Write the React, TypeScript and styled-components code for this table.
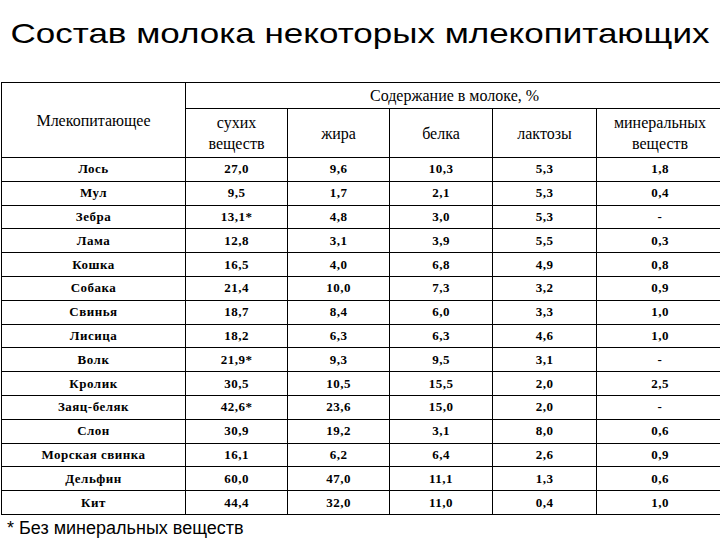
import React from 'react';
import styled, { createGlobalStyle } from 'styled-components';

const rows: [string, string, string, string, string, string][] = [
  ['Лось', '27,0', '9,6', '10,3', '5,3', '1,8'],
  ['Мул', '9,5', '1,7', '2,1', '5,3', '0,4'],
  ['Зебра', '13,1*', '4,8', '3,0', '5,3', '-'],
  ['Лама', '12,8', '3,1', '3,9', '5,5', '0,3'],
  ['Кошка', '16,5', '4,0', '6,8', '4,9', '0,8'],
  ['Собака', '21,4', '10,0', '7,3', '3,2', '0,9'],
  ['Свинья', '18,7', '8,4', '6,0', '3,3', '1,0'],
  ['Лисица', '18,2', '6,3', '6,3', '4,6', '1,0'],
  ['Волк', '21,9*', '9,3', '9,5', '3,1', '-'],
  ['Кролик', '30,5', '10,5', '15,5', '2,0', '2,5'],
  ['Заяц-беляк', '42,6*', '23,6', '15,0', '2,0', '-'],
  ['Слон', '30,9', '19,2', '3,1', '8,0', '0,6'],
  ['Морская свинка', '16,1', '6,2', '6,4', '2,6', '0,9'],
  ['Дельфин', '60,0', '47,0', '11,1', '1,3', '0,6'],
  ['Кит', '44,4', '32,0', '11,0', '0,4', '1,0'],
];

const colWidths = [184, 102, 102, 103, 104, 127];

const serif = `'Liberation Serif', 'Times New Roman', 'DejaVu Serif', serif`;

const GlobalStyle = createGlobalStyle`
  html, body {
    margin: 0;
    padding: 0;
    background: #ffffff;
    overflow: hidden;
  }
`;

const Page = styled.div`
  width: 720px;
  height: 540px;
  overflow: hidden;
  display: flex;
  flex-direction: column;
  background: #ffffff;
`;

const Title = styled.h1`
  margin: 0;
  padding-top: 17px;
  height: 82px;
  box-sizing: border-box;
  text-align: center;
  font-family: 'Liberation Sans', Arial, sans-serif;
  font-weight: 400;
  font-size: 28px;
  line-height: 34px;
  color: #000000;
  white-space: nowrap;
  transform: scaleX(1.25);
  transform-origin: 50% 0;
`;

const TableWrap = styled.div`
  padding-left: 1px;
  width: 730px;
`;

const Table = styled.table`
  border-collapse: collapse;
  table-layout: fixed;
  width: 722px;
  color: #000000;
  font-family: ${serif};
`;

const HeadCell = styled.th<{ $h?: number }>`
  border: 1px solid #000000;
  font-family: ${serif};
  font-weight: 400;
  font-size: 16px;
  line-height: 21px;
  text-align: center;
  vertical-align: middle;
  padding: 0 2px;
  height: ${({ $h }) => ($h ? `${$h}px` : 'auto')};
`;

const Row = styled.tr`
  height: 23.8px;
`;

const Cell = styled.td<{ $name?: boolean }>`
  border: 1px solid #000000;
  font-family: ${serif};
  font-weight: 700;
  font-size: 13px;
  letter-spacing: ${({ $name }) => ($name ? '0.5px' : '0.5px')};
  text-align: center;
  vertical-align: middle;
  padding: 0;
  line-height: 16px;
`;

const Footnote = styled.div`
  font-family: 'Liberation Sans', Arial, sans-serif;
  font-size: 18px;
  line-height: 22px;
  color: #000000;
  padding-left: 7px;
  padding-top: 2px;
`;

export default function App() {
  return (
    <>
      <GlobalStyle />
      <Page>
        <Title>Состав молока некоторых млекопитающих</Title>
        <TableWrap>
          <Table>
            <colgroup>
              {colWidths.map((w, i) => (
                <col key={i} style={{ width: w }} />
              ))}
            </colgroup>
            <thead>
              <tr>
                <HeadCell rowSpan={2}>Млекопитающее</HeadCell>
                <HeadCell colSpan={5} $h={25}>
                  Содержание в молоке, %
                </HeadCell>
              </tr>
              <tr>
                <HeadCell $h={48}>
                  сухих
                  <br />
                  веществ
                </HeadCell>
                <HeadCell>жира</HeadCell>
                <HeadCell>белка</HeadCell>
                <HeadCell>лактозы</HeadCell>
                <HeadCell>
                  минеральных
                  <br />
                  веществ
                </HeadCell>
              </tr>
            </thead>
            <tbody>
              {rows.map((r) => (
                <Row key={r[0]}>
                  {r.map((v, i) => (
                    <Cell key={i} $name={i === 0}>
                      {v}
                    </Cell>
                  ))}
                </Row>
              ))}
            </tbody>
          </Table>
        </TableWrap>
        <Footnote>* Без минеральных веществ</Footnote>
      </Page>
    </>
  );
}
